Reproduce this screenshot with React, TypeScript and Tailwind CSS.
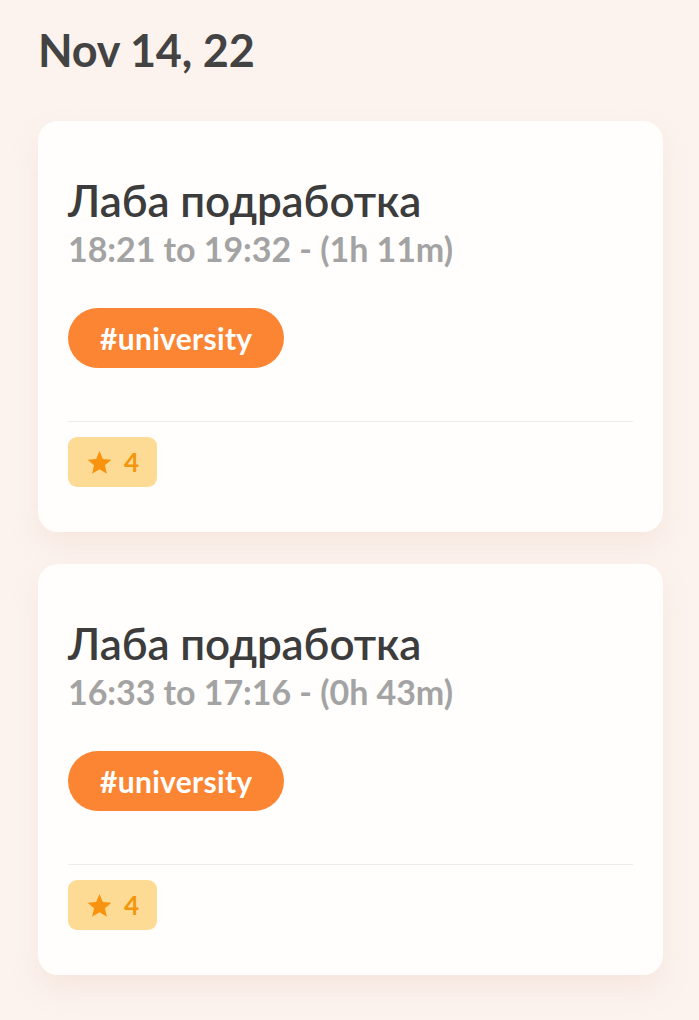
import React from "react";

const entries = [
  { title: "Лаба подработка", time: "18:21 to 19:32 - (1h 11m)", tag: "#university", rating: 4 },
  { title: "Лаба подработка", time: "16:33 to 17:16 - (0h 43m)", tag: "#university", rating: 4 },
];

const Star = () => (
  <svg width="27" height="27" viewBox="0 0 24 24" fill="#f7930f">
    <path d="M12 1.8l3 7.1 7.6.6-5.8 5 1.8 7.5L12 18l-6.6 4 1.8-7.5-5.8-5 7.6-.6z" />
  </svg>
);

export default function App() {
  return (
    <div className="min-h-screen bg-[#fcf3ee] px-[38px] pt-[23px] pb-10 font-['Lato',sans-serif]">
      <h1 className="text-[45px] font-bold text-[#434343] leading-[54px] tracking-[-0.2px]">Nov 14, 22</h1>

      <div className="mt-[44px] w-[625px] flex flex-col gap-[32px]">
        {entries.map((e, i) => (
          <div
            key={i}
            className="bg-[#fffefd] rounded-[20px] pt-[54px] pb-[45px] px-[30px] shadow-[0_14px_24px_rgba(230,200,185,0.25)]"
          >
            <h2 className="text-[44px] font-semibold text-[#3c3c3c] leading-[50px] tracking-[-0.1px]">{e.title}</h2>
            <p className="mt-[4px] text-[34px] font-bold text-[#a3a3a3] leading-[40px] tracking-[-0.05px]">{e.time}</p>

            <div className="mt-[39px] inline-flex items-center h-[60px] px-[32px] rounded-full bg-[#fc8533] text-white text-[30px] font-bold tracking-[0.3px]">
              {e.tag}
            </div>

            <div className="mt-[53px] border-t border-[#ececec]" />

            <div className="mt-[15px] inline-flex items-center gap-[11px] h-[50px] pl-[18px] pr-[18px] rounded-[9px] bg-[#fedb94]">
              <Star />
              <span className="text-[26px] font-bold text-[#f2960d]">{e.rating}</span>
            </div>
          </div>
        ))}
      </div>
    </div>
  );
}
